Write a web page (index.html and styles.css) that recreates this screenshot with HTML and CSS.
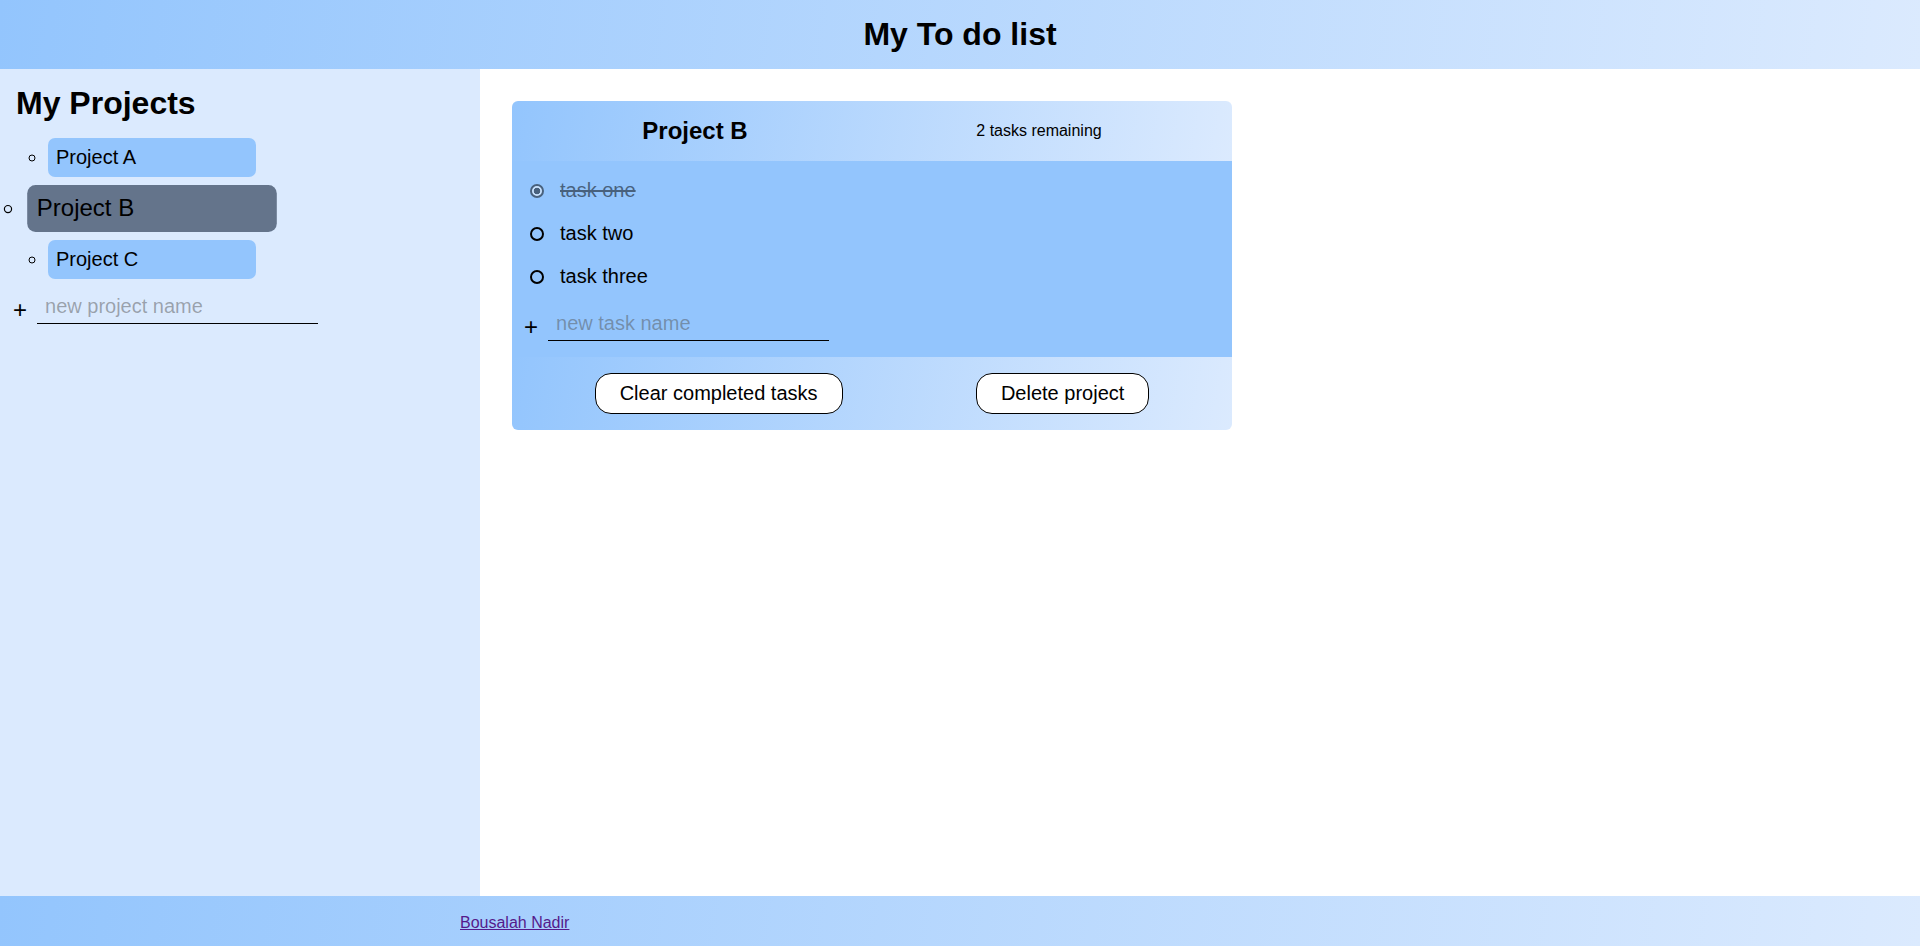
FILE: index.html
```html
<!DOCTYPE html>
<html lang="en">
<head>
<meta charset="utf-8">
<title>My To do list</title>
<link rel="stylesheet" href="styles.css">
</head>
<body>
<header class="top">
  <h1 class="title">My To do list</h1>
</header>
<div class="layout">
  <aside class="sidebar">
    <h1 class="side-title">My Projects</h1>
    <ul class="project-list">
      <li class="project"><button class="project-btn">Project A</button></li>
      <li class="project active"><button class="project-btn">Project B</button></li>
      <li class="project"><button class="project-btn">Project C</button></li>
    </ul>
    <form class="add-row add-project">
      <span class="plus">+</span>
      <input class="add-input" type="text" placeholder="new project name">
    </form>
  </aside>
  <main class="content">
    <section class="card">
      <div class="card-head">
        <h2 class="card-title">Project B</h2>
        <span class="remaining">2 tasks remaining</span>
      </div>
      <div class="card-body">
        <ul class="tasks">
          <li class="task done"><input class="task-check" type="radio" name="t1" checked><span class="task-name">task one</span></li>
          <li class="task"><input class="task-check" type="radio" name="t2"><span class="task-name">task two</span></li>
          <li class="task"><input class="task-check" type="radio" name="t3"><span class="task-name">task three</span></li>
        </ul>
        <form class="add-row add-task">
          <span class="plus">+</span>
          <input class="add-input" type="text" placeholder="new task name">
        </form>
      </div>
      <div class="card-foot">
        <button class="pill">Clear completed tasks</button>
        <button class="pill">Delete project</button>
      </div>
    </section>
  </main>
</div>
<footer class="bottom">
  <a class="credit" href="#">Bousalah Nadir</a>
</footer>
</body>
</html>
```
FILE: styles.css
```css
* { box-sizing: border-box; }

html, body {
  margin: 0;
  height: 100%;
}

body {
  font-family: "Liberation Sans", Arial, sans-serif;
  color: #000;
  display: flex;
  flex-direction: column;
  min-height: 946px;
}

.top {
  height: 69px;
  flex: none;
  display: flex;
  align-items: center;
  justify-content: center;
  background: linear-gradient(97deg, #93c5fd, #dbeafe);
}

.title {
  margin: 0;
  font-size: 32px;
  font-weight: bold;
}

.layout {
  flex: 1;
  display: grid;
  grid-template-columns: 480px 1fr;
}

.sidebar {
  background: #dbeafe;
  padding: 16px 12px;
}

.side-title {
  margin: 0 0 16px;
  padding-left: 4px;
  font-size: 32px;
  font-weight: bold;
}

.project-list {
  margin: 0;
  padding-left: 36px;
  list-style: circle;
}

.project {
  width: fit-content;
  font-size: 20px;
}

.project + .project {
  margin-top: 12px;
}

.project.active {
  transform: scale(1.2);
}

.project-btn {
  display: block;
  width: 208px;
  padding: 8px 8px;
  border: none;
  border-radius: 7px;
  background: #93c5fd;
  font-family: "Liberation Sans", Arial, sans-serif;
  font-size: 20px;
  line-height: 23px;
  color: #000;
  text-align: left;
}

.project.active .project-btn {
  background: #64748b;
}

.add-row {
  display: flex;
  align-items: center;
  gap: 10px;
  margin: 8px 0 0;
}

.add-project {
  margin-left: 1px;
  margin-top: 9px;
}

.plus {
  font-size: 24px;
  margin-top: 7px;
}

.add-input {
  width: 281px;
  padding: 7px 8px 5px;
  border: none;
  border-bottom: 1px solid #000;
  background: transparent;
  font-family: "Liberation Sans", Arial, sans-serif;
  font-size: 20px;
  line-height: 23px;
  color: #000;
  outline: none;
}

.add-input::placeholder {
  color: rgba(80, 80, 80, 0.47);
}

.content {
  background: #fff;
  padding: 32px;
}

.card {
  width: 720px;
  border-radius: 6px;
  overflow: hidden;
}

.card-head,
.card-foot {
  display: flex;
  align-items: center;
  justify-content: space-around;
  padding: 16px;
  background: linear-gradient(100deg, #93c5fd, #dbeafe);
}

.card-title {
  margin: 0;
  font-size: 24px;
  line-height: 28px;
  font-weight: bold;
}

.remaining {
  font-size: 16px;
}

.card-body {
  background: #93c5fd;
  padding: 8px 12px 16px;
}

.tasks {
  list-style: none;
  margin: 0;
  padding: 0;
}

.task {
  display: flex;
  align-items: center;
  gap: 16px;
  padding: 10px 0;
  font-size: 20px;
  line-height: 23px;
}

.task.done {
  opacity: 0.5;
}

.task.done .task-name {
  text-decoration: line-through;
}

.task-check {
  appearance: none;
  -webkit-appearance: none;
  width: 14px;
  height: 14px;
  margin: 0 0 0 6px;
  border: 2px solid #000;
  border-radius: 50%;
  background: transparent;
  flex: none;
}

.task-check:checked {
  background: radial-gradient(circle, #000 0 3px, #fff 3.6px);
}

.add-task {
  margin-top: 7px;
}

.pill {
  padding: 8px 24px;
  border: 1px solid #000;
  border-radius: 16px;
  background: #fff;
  font-family: "Liberation Sans", Arial, sans-serif;
  font-size: 20px;
  line-height: 23px;
  color: #000;
}

.bottom {
  height: 50px;
  flex: none;
  display: flex;
  align-items: center;
  padding: 3px 0 0 460px;
  background: linear-gradient(97deg, #93c5fd, #dbeafe);
}

.credit {
  font-size: 16px;
  color: #551a8b;
}
```
